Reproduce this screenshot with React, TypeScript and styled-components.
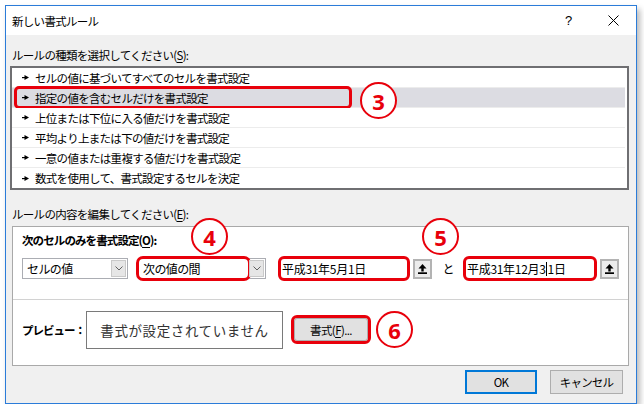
import styled, { createGlobalStyle } from "styled-components";

const GlobalStyle = createGlobalStyle`
  html, body {
    margin: 0;
    padding: 0;
    background: #ffffff;
  }
  body {
    font-family: "Noto Sans CJK JP", "Noto Sans", sans-serif;
    color: #000;
  }
`;

const RED = "#e8000b";

const Window = styled.div`
  margin: 5px 0 0 5px;
  width: 632px;
  height: 399px;
  box-sizing: border-box;
  border: 1px solid #2b7cd9;
  background: #f0f0f0;
  box-shadow: 3px 4px 6px rgba(0, 0, 0, 0.28);
  display: flex;
  flex-direction: column;
`;

const TitleBar = styled.div`
  height: 29px;
  background: #ffffff;
  display: flex;
  align-items: center;
  padding-left: 6px;
`;

const TitleText = styled.div`
  font-size: 11.5px;
  letter-spacing: -0.7px;
  color: #000;
`;

const TitleButtons = styled.div`
  margin-left: auto;
  display: flex;
  height: 100%;
`;

const TitleButton = styled.div`
  width: 45px;
  height: 100%;
  display: flex;
  align-items: center;
  justify-content: center;
  font-family: "Liberation Sans", sans-serif;
  font-size: 13px;
  color: #000;
`;

const Body = styled.div`
  flex: 1;
  display: flex;
  flex-direction: column;
  padding: 12px 7px 0 4px;
`;

const SectionLabel = styled.div<{ $gap?: number }>`
  font-size: 11.5px;
  letter-spacing: -0.7px;
  line-height: 16px;
  height: 16px;
  padding-left: 2px;
  margin-top: ${(p) => p.$gap ?? 0}px;
`;

const Mnemonic = styled.span`
  text-decoration: underline;
  text-underline-offset: 2px;
`;

const RuleList = styled.div`
  margin-top: 3px;
  height: 124px;
  box-sizing: border-box;
  border: 2px solid #6f6f72;
  background: #ffffff;
  display: flex;
  flex-direction: column;
`;

const RuleRow = styled.div<{ $selected?: boolean; $last?: boolean }>`
  position: relative;
  height: 20px;
  box-sizing: border-box;
  display: flex;
  align-items: center;
  gap: 6px;
  padding-left: 10px;
  margin-right: 2px;
  font-size: 11.5px;
  letter-spacing: -0.7px;
  background: ${(p) => (p.$selected ? "#dcdce2" : "#ffffff")};
  border-bottom: ${(p) => (p.$last ? "none" : "1px solid #ececec")};
`;

const RowMark = styled.span`
  position: absolute;
  left: 2px;
  top: -2px;
  width: 338px;
  height: 23px;
  box-sizing: border-box;
  border: 3px solid ${RED};
  border-radius: 5px;
`;

const Badge = styled.div<{ $top: number; $left: number }>`
  position: absolute;
  top: ${(p) => p.$top}px;
  left: ${(p) => p.$left}px;
  width: 37px;
  height: 37px;
  box-sizing: border-box;
  border: 2.5px solid ${RED};
  border-radius: 50%;
  background: #ffffff;
  display: flex;
  align-items: center;
  justify-content: center;
  color: ${RED};
  font-family: "Noto Sans", "Liberation Sans", sans-serif;
  font-weight: 700;
  font-size: 22px;
  letter-spacing: 0;
  z-index: 2;
`;

const InlineBadge = styled(Badge)`
  position: static;
  margin-left: 8px;
`;

const EditBox = styled.div`
  margin: 4px 0 0 2px;
  height: 140px;
  box-sizing: border-box;
  border: 1px solid #a9a9a9;
  background: #ffffff;
  display: flex;
  flex-direction: column;
`;

const ConditionSection = styled.div`
  padding: 5px 9px 0 9px;
  height: 72px;
  box-sizing: border-box;
`;

const BoldLabel = styled.div`
  font-size: 11.5px;
  font-weight: 700;
  letter-spacing: -0.9px;
  line-height: 16px;
`;

const ControlRow = styled.div`
  margin-top: 10px;
  display: flex;
  align-items: center;
`;

const Combo = styled.div<{ $width: number; $space?: number }>`
  position: relative;
  width: ${(p) => p.$width}px;
  height: 21px;
  box-sizing: border-box;
  border: 1px solid #abadb3;
  background: #ffffff;
  display: flex;
  margin-right: ${(p) => p.$space ?? 0}px;
`;

const ComboText = styled.div<{ $marked?: boolean }>`
  flex: 1;
  display: flex;
  align-items: center;
  padding-left: 4px;
  font-size: 12px;
  letter-spacing: -0.6px;
  border-radius: ${(p) => (p.$marked ? "4px" : "0")};
  outline: ${(p) => (p.$marked ? `3px solid ${RED}` : "none")};
  outline-offset: 0px;
`;

const ChevronButton = styled.div`
  width: 15px;
  margin: 1px;
  background: #e6e6e6;
  border: 1px solid #c9c9c9;
  box-sizing: border-box;
  display: flex;
  align-items: center;
  justify-content: center;
`;

const DateField = styled.div<{ $width: number }>`
  position: relative;
  width: ${(p) => p.$width}px;
  height: 21px;
  box-sizing: border-box;
  background: #ffffff;
  display: flex;
  align-items: center;
  padding-left: 2px;
  font-size: 12px;
  letter-spacing: -0.3px;
  border-radius: 4px;
  outline: 3px solid ${RED};
  outline-offset: -1px;
`;

const Caret = styled.span`
  display: inline-block;
  width: 1px;
  height: 14px;
  background: #000;
  margin: 0 0.5px;
  vertical-align: middle;
`;

const PickButton = styled.div`
  width: 19px;
  height: 20px;
  margin-left: 5px;
  box-sizing: border-box;
  border: 2px solid #b3b3b3;
  background: #ececec;
  display: flex;
  align-items: center;
  justify-content: center;
`;

const Conjunction = styled.div`
  width: 33px;
  text-align: center;
  font-size: 12px;
`;

const PreviewSection = styled.div`
  flex: 1;
  border-top: 1px solid #d2d2d2;
  display: flex;
  align-items: center;
  padding: 0 0 6px 9px;
`;

const PreviewLabel = styled.div`
  font-size: 11.5px;
  font-weight: 700;
  letter-spacing: -1px;
  width: 64px;
`;

const PreviewBox = styled.div`
  width: 197px;
  height: 38px;
  box-sizing: border-box;
  border: 1px solid #7a7a7a;
  display: flex;
  align-items: center;
  justify-content: center;
  font-size: 13.5px;
  letter-spacing: 0.6px;
  color: #333;
`;

const FormatButton = styled.div`
  margin-left: 11px;
  width: 74px;
  height: 23px;
  box-sizing: border-box;
  border: 1px solid #adadad;
  background: #e1e1e1;
  display: flex;
  align-items: center;
  justify-content: center;
  font-size: 11.5px;
  letter-spacing: -0.6px;
  border-radius: 3px;
  outline: 3px solid ${RED};
  outline-offset: 0px;
`;

const Footer = styled.div`
  display: flex;
  justify-content: flex-end;
  gap: 13px;
  margin-top: 4px;
  padding-right: 6px;
`;

const DialogButton = styled.div<{ $primary?: boolean }>`
  width: ${(p) => (p.$primary ? 72 : 73)}px;
  height: 24px;
  box-sizing: border-box;
  border: ${(p) => (p.$primary ? "2px solid #0078d7" : "1px solid #adadad")};
  background: #e1e1e1;
  display: flex;
  align-items: center;
  justify-content: center;
  font-size: 11.5px;
  letter-spacing: -0.8px;
`;

const RowArrow = () => (
  <svg width="7" height="5" viewBox="0 0 7 5">
    <rect x="0" y="2" width="3" height="1.2" fill="#000" />
    <polygon points="2.5,0 7,2.5 2.5,5" fill="#000" />
  </svg>
);

const Chevron = () => (
  <svg width="8" height="5" viewBox="0 0 8 5">
    <polyline points="0.5,0.5 4,4 7.5,0.5" fill="none" stroke="#606060" strokeWidth="1" />
  </svg>
);

const PickIcon = () => (
  <svg width="9" height="10" viewBox="0 0 9 10">
    <polygon points="4.5,0 8.5,4.5 0.5,4.5" fill="#000" />
    <rect x="3.3" y="4" width="2.4" height="3.5" fill="#000" />
    <rect x="0" y="8.3" width="9" height="1.7" fill="#000" />
  </svg>
);

const CloseIcon = () => (
  <svg width="11" height="11" viewBox="0 0 11 11">
    <line x1="0.5" y1="0.5" x2="10.5" y2="10.5" stroke="#000" strokeWidth="1" />
    <line x1="10.5" y1="0.5" x2="0.5" y2="10.5" stroke="#000" strokeWidth="1" />
  </svg>
);

const rules = [
  "セルの値に基づいてすべてのセルを書式設定",
  "指定の値を含むセルだけを書式設定",
  "上位または下位に入る値だけを書式設定",
  "平均より上または下の値だけを書式設定",
  "一意の値または重複する値だけを書式設定",
  "数式を使用して、書式設定するセルを決定",
];

export default function App() {
  return (
    <>
      <GlobalStyle />
      <Window>
        <TitleBar>
          <TitleText>新しい書式ルール</TitleText>
          <TitleButtons>
            <TitleButton>?</TitleButton>
            <TitleButton>
              <CloseIcon />
            </TitleButton>
          </TitleButtons>
        </TitleBar>
        <Body>
          <SectionLabel>
            ルールの種類を選択してください(<Mnemonic>S</Mnemonic>):
          </SectionLabel>
          <RuleList>
            {rules.map((r, i) => (
              <RuleRow key={r} $selected={i === 1} $last={i === rules.length - 1}>
                <RowArrow />
                <span>{r}</span>
                {i === 1 && (
                  <>
                    <RowMark />
                    <Badge $top={-6} $left={348}>3</Badge>
                  </>
                )}
              </RuleRow>
            ))}
          </RuleList>
          <SectionLabel $gap={16}>
            ルールの内容を編集してください(<Mnemonic>E</Mnemonic>):
          </SectionLabel>
          <EditBox>
            <ConditionSection>
              <BoldLabel>
                次のセルのみを書式設定(<Mnemonic>O</Mnemonic>):
              </BoldLabel>
              <ControlRow>
                <Combo $width={106} $space={10}>
                  <ComboText>セルの値</ComboText>
                  <ChevronButton>
                    <Chevron />
                  </ChevronButton>
                </Combo>
                <Combo $width={128} $space={14}>
                  <ComboText $marked>次の値の間</ComboText>
                  <ChevronButton>
                    <Chevron />
                  </ChevronButton>
                  <Badge $top={-41} $left={52}>4</Badge>
                </Combo>
                <DateField $width={128}>平成31年5月1日</DateField>
                <PickButton>
                  <PickIcon />
                </PickButton>
                <Conjunction>と</Conjunction>
                <DateField $width={130}>
                  平成31年12月3<Caret />1日
                  <Badge $top={-40} $left={-43}>5</Badge>
                </DateField>
                <PickButton>
                  <PickIcon />
                </PickButton>
              </ControlRow>
            </ConditionSection>
            <PreviewSection>
              <PreviewLabel>プレビュー：</PreviewLabel>
              <PreviewBox>書式が設定されていません</PreviewBox>
              <FormatButton>
                書式(<Mnemonic>F</Mnemonic>)...
              </FormatButton>
              <InlineBadge $top={0} $left={0}>6</InlineBadge>
            </PreviewSection>
          </EditBox>
          <Footer>
            <DialogButton $primary>OK</DialogButton>
            <DialogButton>キャンセル</DialogButton>
          </Footer>
        </Body>
      </Window>
    </>
  );
}
